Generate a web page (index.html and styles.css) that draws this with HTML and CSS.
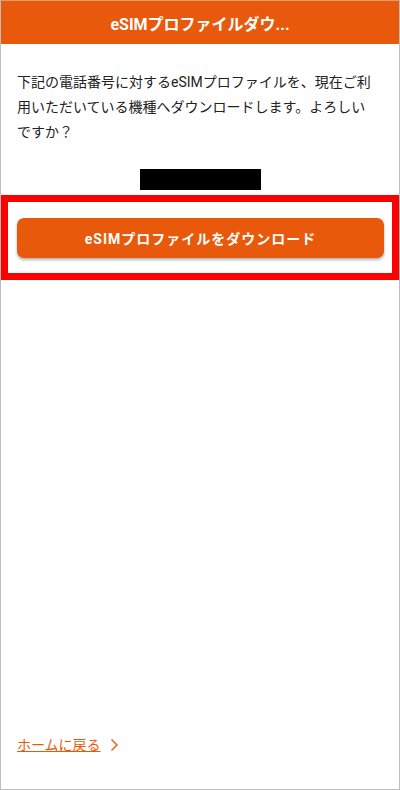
FILE: index.html
```html
<!DOCTYPE html>
<html lang="ja">
<head>
<meta charset="UTF-8">
<meta name="viewport" content="width=device-width, initial-scale=1.0">
<title>eSIMプロファイルダウンロード</title>
<link rel="stylesheet" href="styles.css">
</head>
<body>

<div class="screen">
  <header class="header">
    <h1 class="title">eSIMプロファイルダウ...</h1>
  </header>

  <main class="content">
    <p class="message">下記の電話番号に対するeSIMプロファイルを、現在ご利用いただいている機種へダウンロードします。よろしいですか？</p>
    <div class="number"></div>
    <div class="highlight">
      <button class="download-btn">eSIMプロファイルをダウンロード</button>
    </div>
  </main>

  <footer class="footer">
    <a class="home-link" href="#">ホームに戻る</a>
    <svg class="chevron" width="9" height="14" viewBox="0 0 9 14">
      <polyline points="1.5,1.5 7,7 1.5,12.5" fill="none" stroke="#e8590c" stroke-width="1.4"/>
    </svg>
  </footer>
</div>

</body>
</html>
```

FILE: styles.css
```css
body {
  margin: 0;
  font-family: Roboto, "Noto Sans CJK JP", sans-serif;
  color: #333;
  background-color: #fff;
}
.screen {
  box-sizing: border-box;
  width: 400px;
  height: 790px;
  border: 1px solid #bdbdbd;
  border-top-color: #eb9a6c;
  display: flex;
  flex-direction: column;
}
.header {
  background-color: #e8590c; /* laranja */
  height: 43px;
  display: flex;
  justify-content: center;
  align-items: center;
}
.title {
  margin: 0;
  color: #fff;
  font-size: 16px;
  font-weight: bold;
}
.content {
  flex: 1;
  padding: 26px 16px 0;
}
.message {
  margin: 0;
  padding-right: 5px;
  font-size: 14px;
  line-height: 25px;
  color: #222;
}
.number {
  width: 121px;
  height: 21px;
  background-color: #000;
  margin: 24px auto 0;
}
.highlight {
  margin: 5px -16px 0;
  border: 7px solid #ff0000;
  padding: 16px 8px 15px 9px;
}
.download-btn {
  display: block;
  width: 100%;
  height: 40px;
  border: none;
  border-radius: 7px;
  background-color: #e8590c;
  color: #fff;
  font-family: inherit;
  font-size: 14px;
  font-weight: bold;
  letter-spacing: 1px;
  box-shadow: 0 2px 3px rgba(0, 0, 0, 0.3);
  cursor: pointer;
}
.footer {
  padding: 0 16px 34px;
  display: flex;
  align-items: center;
  gap: 9px;
}
.home-link {
  color: #e8590c;
  font-size: 14px;
  line-height: 20px;
  text-decoration: underline;
}
.chevron {
  display: block;
}
```
